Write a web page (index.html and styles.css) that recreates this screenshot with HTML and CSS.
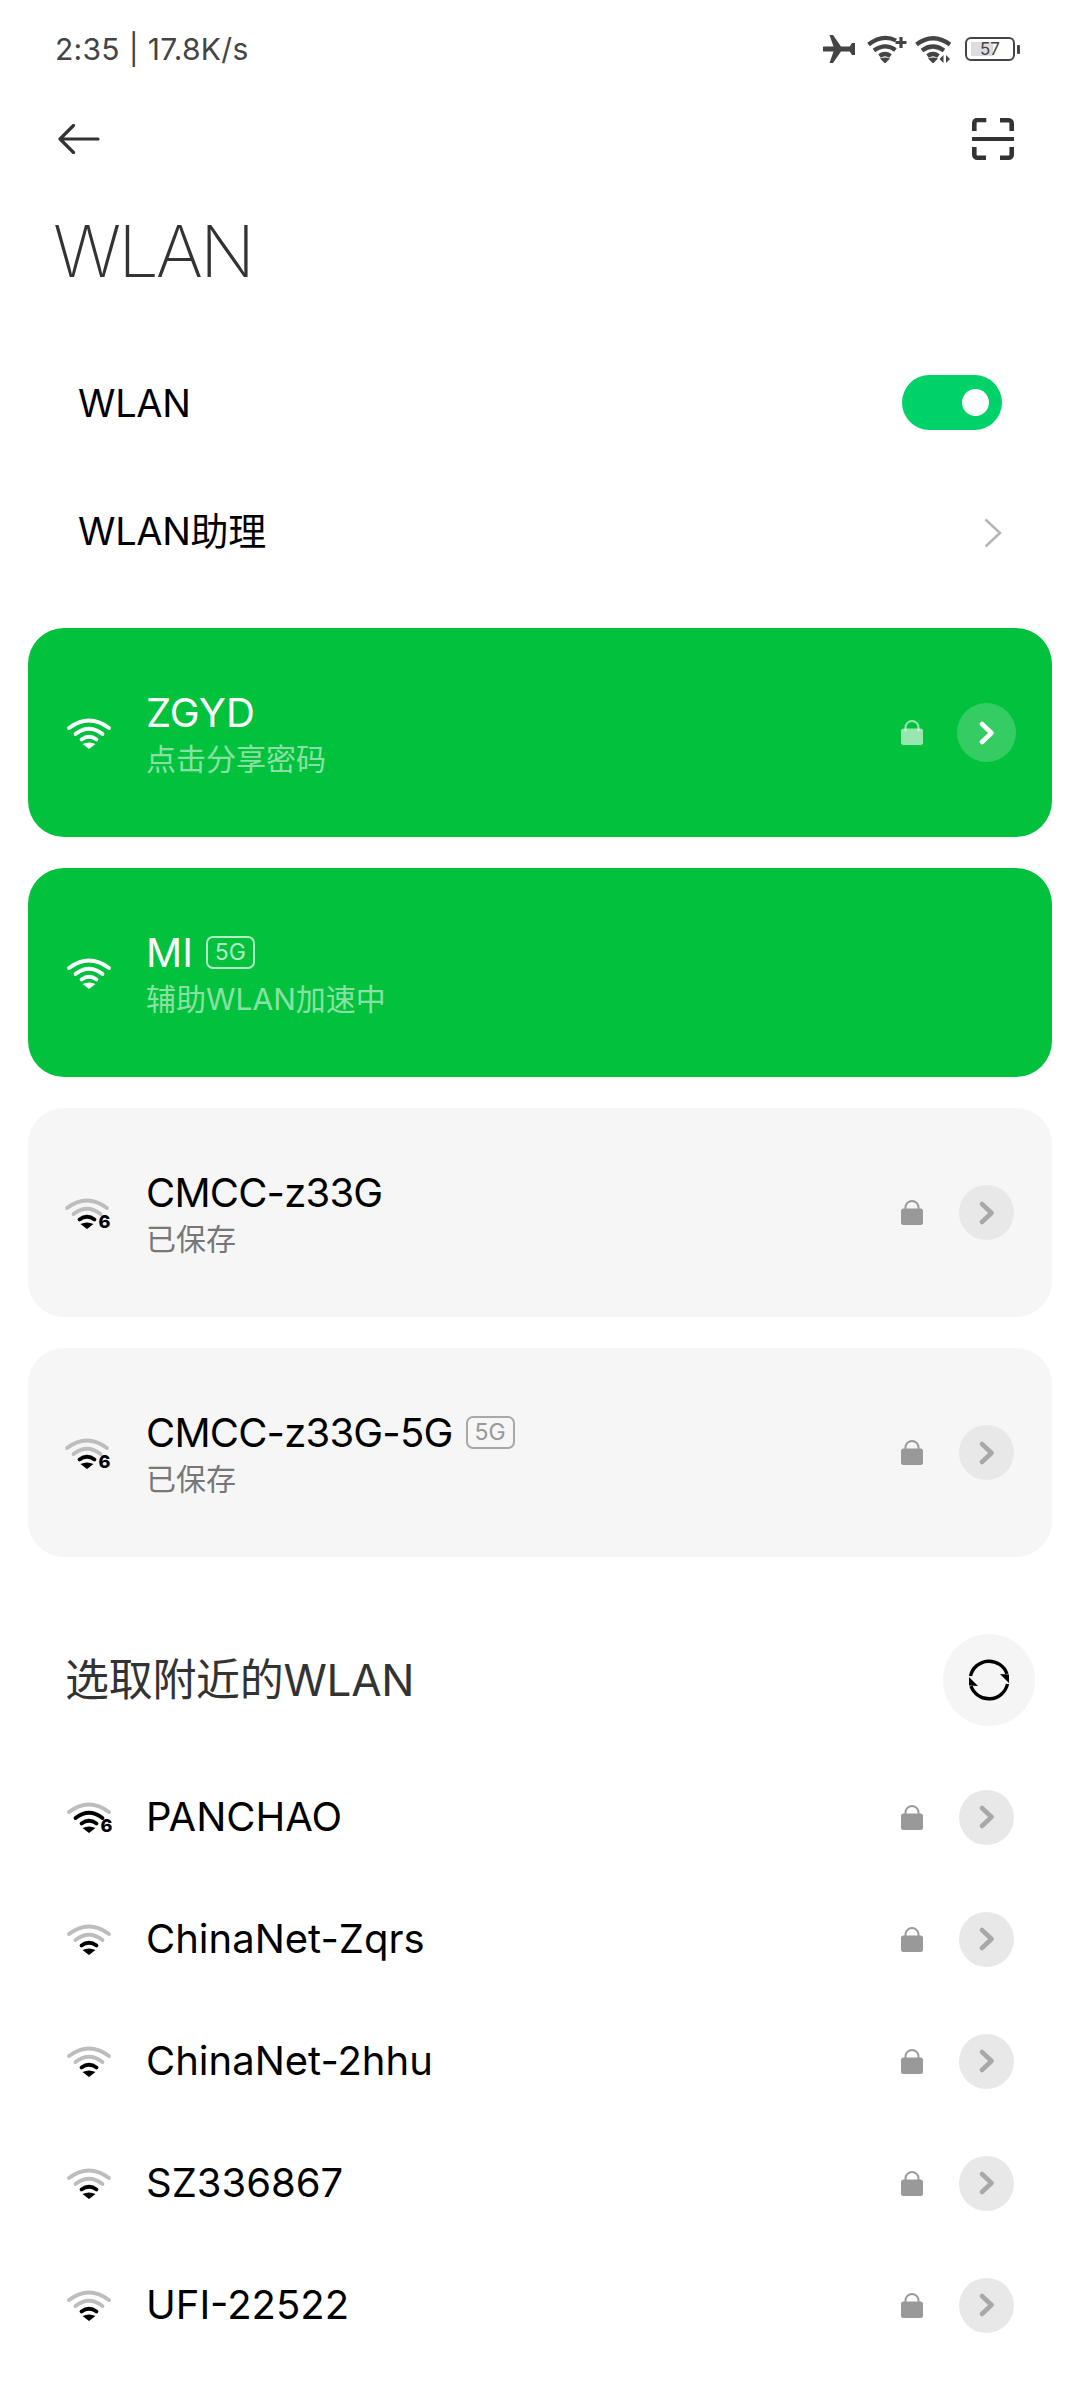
FILE: index.html
```
<!DOCTYPE html>
<html lang="zh">
<head>
<meta charset="utf-8">
<title>WLAN</title>
<link rel="stylesheet" href="styles.css">
</head>
<body>
<svg class="defs" width="0" height="0" aria-hidden="true">
  <defs>
    <symbol id="lock" viewBox="0 0 22 25">
      <path class="shackle" d="M4.5 11V7.5a6.5 6.5 0 0 1 13 0V11" fill="none" stroke="currentColor" stroke-width="2"/>
      <rect y="8.500" width="22" height="16.500" rx="2.500" fill="currentColor"/>
    </symbol>
    <symbol id="chev" viewBox="0 0 16 24">
      <path d="M3 3l9.500 9L3 21" fill="none" stroke="currentColor" stroke-width="4.500" stroke-linecap="round" stroke-linejoin="round"/>
    </symbol>
    <symbol id="wifi-arc1" viewBox="0 0 44 30" overflow="visible"><path d="M2 10Q22-5 42 10" fill="none" stroke="currentColor" stroke-width="3.800" stroke-linecap="round"/></symbol>
    <symbol id="wifi-arc2" viewBox="0 0 44 30" overflow="visible"><path d="M8.500 16Q22 5.500 35.500 16" fill="none" stroke="currentColor" stroke-width="3.800" stroke-linecap="round"/></symbol>
    <symbol id="wifi-arc3" viewBox="0 0 44 30" overflow="visible"><path d="M14.500 21.500Q22 16 29.500 21.500" fill="none" stroke="currentColor" stroke-width="3.800" stroke-linecap="round"/></symbol>
    <symbol id="wifi-dot" viewBox="0 0 44 30" overflow="visible"><path d="M22 31l-6.500-5q6.500-3 13 0z" fill="currentColor"/></symbol>
  </defs>
</svg>

<header class="status">
  <span class="status-text">2:35 | 17.8K/s</span>
  <div class="status-icons">
    <svg class="ic-plane" viewBox="0 0 32 28"><path d="M1.500 11.500h9L6.500 0h3.500l8 11.500h8.700l2.300-3.600H32v12.200h-3l-2.300-3.600H18L10 28H6.500l4-11.500h-9a2.500 2.500 0 0 1 0-5z" fill="#444"/></svg>
    <svg class="ic-wifi-s" viewBox="0 0 40 28" fill="none" stroke="#444" stroke-width="4.200">
      <path d="M1.500 9.500Q15.500-1.500 29 5.500"/><path d="M7 15.500Q18 7.500 28.500 15"/><path d="M12.500 21Q18 17 23.500 21"/>
      <path d="M18 28.500l-5-5q5-2 10 0z" fill="#444" stroke="none"/><path d="M34 2v11M28.500 7.500h11" stroke-width="3.200"/>
    </svg>
    <svg class="ic-wifi-a" viewBox="0 0 37 28" fill="none" stroke="#444" stroke-width="4.200">
      <path d="M1.500 9.500Q18-3 35 9.500"/><path d="M7 15.500Q18 7.500 29 15.500"/><path d="M12.500 21Q18 17 23.500 21"/>
      <path d="M18 28.500l-5-5q5-2 10 0zM28.500 20v8l-4-4zM31 20l4 4-4 4z" fill="#444" stroke="none"/>
    </svg>
    <div class="battery"><div class="battery-body"><span class="battery-fill"></span><span class="battery-num">57</span></div><span class="battery-nub"></span></div>
  </div>
</header>

<nav class="toolbar">
  <svg class="ic-back" viewBox="0 0 42 30" fill="none" stroke="#333" stroke-width="3.200" stroke-linecap="round" stroke-linejoin="round"><path d="M15.500 1.500L2 15l13.500 13.500M2 15h38"/></svg>
  <svg class="ic-scan" viewBox="0 0 42 42" fill="none" stroke="#333" stroke-width="4.600"><path d="M2.300 13V5a3 3 0 0 1 3-3h9M28 2.300h8.700a3 3 0 0 1 3 3V13M2.300 29v7.700a3 3 0 0 0 3 3H14M28 39.700h8.700a3 3 0 0 0 3-3V29"/><path d="M0 21h42" stroke-width="4" stroke-linecap="round"/></svg>
</nav>

<h1 class="title">WLAN</h1>

<section class="settings">
  <div class="setting"><span class="setting-label">WLAN</span><span class="toggle"><span class="knob"></span></span></div>
  <div class="setting"><span class="setting-label">WLAN助理</span><svg class="ic-more" viewBox="0 0 18 30" fill="none" stroke="#b5b5b5" stroke-width="2.500"><path d="M1.500 1.500L16 15 1.500 28.500"/></svg></div>
</section>

<section class="cards">
  <article class="card card-on">
    <svg class="wifi wifi-white"><use href="#wifi-arc1"/><use href="#wifi-arc2"/><use href="#wifi-arc3"/><use href="#wifi-dot"/></svg>
    <div class="info"><div class="name">ZGYD</div><div class="sub">点击分享密码</div></div>
    <svg class="lock"><use href="#lock"/></svg>
    <span class="go go-on"><svg class="chev"><use href="#chev"/></svg></span>
  </article>
  <article class="card card-on">
    <svg class="wifi wifi-white"><use href="#wifi-arc1"/><use href="#wifi-arc2"/><use href="#wifi-arc3"/><use href="#wifi-dot"/></svg>
    <div class="info"><div class="name">MI<span class="band">5G</span></div><div class="sub">辅助WLAN加速中</div></div>
  </article>
  <article class="card card-saved">
    <svg class="wifi wifi-six"><use class="dim" href="#wifi-arc1"/><use class="dim" href="#wifi-arc2"/><use href="#wifi-arc3"/><use href="#wifi-dot"/><text x="33.500" y="29.500" class="six">6</text></svg>
    <div class="info"><div class="name name-tight">CMCC-z33G</div><div class="sub">已保存</div></div>
    <svg class="lock"><use href="#lock"/></svg>
    <span class="go"><svg class="chev"><use href="#chev"/></svg></span>
  </article>
  <article class="card card-saved">
    <svg class="wifi wifi-six"><use class="dim" href="#wifi-arc1"/><use class="dim" href="#wifi-arc2"/><use href="#wifi-arc3"/><use href="#wifi-dot"/><text x="33.500" y="29.500" class="six">6</text></svg>
    <div class="info"><div class="name name-tight">CMCC-z33G-5G<span class="band">5G</span></div><div class="sub">已保存</div></div>
    <svg class="lock"><use href="#lock"/></svg>
    <span class="go"><svg class="chev"><use href="#chev"/></svg></span>
  </article>
</section>

<section class="nearby-head">
  <h2 class="nearby-title">选取附近的WLAN</h2>
  <span class="refresh">
    <svg class="ic-refresh" viewBox="0 0 42 42" fill="none" stroke="#000" stroke-width="3.400"><path d="M2.500 17A19 19 0 0 1 39 15"/><path d="M39.500 25A19 19 0 0 1 3 27"/><path d="M41 24l-9-9 9 .5zM1 18l9 9-9-.5z" fill="#000" stroke="none"/></svg>
  </span>
</section>

<section class="nearby">
  <div class="row">
    <svg class="wifi"><use class="dim" href="#wifi-arc1"/><use href="#wifi-arc2"/><use href="#wifi-arc3"/><use href="#wifi-dot"/><text x="33.500" y="29.500" class="six">6</text></svg>
    <div class="info"><div class="name">PANCHAO</div></div>
    <svg class="lock"><use href="#lock"/></svg>
    <span class="go"><svg class="chev"><use href="#chev"/></svg></span>
  </div>
  <div class="row">
    <svg class="wifi"><use class="dim" href="#wifi-arc1"/><use class="dim" href="#wifi-arc2"/><use href="#wifi-arc3"/><use href="#wifi-dot"/></svg>
    <div class="info"><div class="name">ChinaNet-Zqrs</div></div>
    <svg class="lock"><use href="#lock"/></svg>
    <span class="go"><svg class="chev"><use href="#chev"/></svg></span>
  </div>
  <div class="row">
    <svg class="wifi"><use class="dim" href="#wifi-arc1"/><use class="dim" href="#wifi-arc2"/><use href="#wifi-arc3"/><use href="#wifi-dot"/></svg>
    <div class="info"><div class="name">ChinaNet-2hhu</div></div>
    <svg class="lock"><use href="#lock"/></svg>
    <span class="go"><svg class="chev"><use href="#chev"/></svg></span>
  </div>
  <div class="row">
    <svg class="wifi"><use class="dim" href="#wifi-arc1"/><use class="dim" href="#wifi-arc2"/><use href="#wifi-arc3"/><use href="#wifi-dot"/></svg>
    <div class="info"><div class="name">SZ336867</div></div>
    <svg class="lock"><use href="#lock"/></svg>
    <span class="go"><svg class="chev"><use href="#chev"/></svg></span>
  </div>
  <div class="row">
    <svg class="wifi"><use class="dim" href="#wifi-arc1"/><use class="dim" href="#wifi-arc2"/><use href="#wifi-arc3"/><use href="#wifi-dot"/></svg>
    <div class="info"><div class="name">UFI-22522</div></div>
    <svg class="lock"><use href="#lock"/></svg>
    <span class="go"><svg class="chev"><use href="#chev"/></svg></span>
  </div>
</section>
</body>
</html>
```
FILE: styles.css
```
* { box-sizing: border-box; }
html, body { margin: 0; padding: 0; }
body {
  width: 1080px;
  height: 2400px;
  overflow: hidden;
  background: #fff;
  color: #000;
  font-family: "Inter", "Noto Sans CJK SC", sans-serif;
}
.defs { position: absolute; }

/* status bar */
.status {
  height: 98px;
  padding: 0 60px 0 55px;
  display: flex;
  align-items: center;
  justify-content: space-between;
}
.status-text { font-size: 30px; color: #444; letter-spacing: .3px; }
.status-icons { display: flex; align-items: center; }
.ic-plane { width: 32px; height: 28px; margin-right: 12px; }
.ic-wifi-s { width: 40px; height: 28px; margin-right: 8px; }
.ic-wifi-a { width: 37px; height: 28px; margin-right: 13px; }
.battery { display: flex; align-items: center; gap: 2px; }
.battery-body {
  position: relative;
  width: 50px;
  height: 24px;
  border: 2px solid #444;
  border-radius: 6px;
  display: flex;
  align-items: center;
  justify-content: center;
}
.battery-fill { position: absolute; left: 4px; top: 3px; bottom: 3px; width: 22px; background: #ddd; }
.battery-num { position: relative; font-size: 17px; color: #444; }
.battery-nub { width: 3px; height: 9px; background: #444; border-radius: 1px; }

/* toolbar */
.toolbar {
  height: 82px;
  padding: 0 66px 0 58px;
  display: flex;
  align-items: center;
  justify-content: space-between;
}
.ic-back { width: 42px; height: 30px; }
.ic-scan { width: 42px; height: 42px; }

.title {
  margin: 0;
  height: 140px;
  padding: 0 0 0 53px;
  font-size: 72px;
  font-weight: 250;
  line-height: 142px;
  letter-spacing: -3px;
  color: #333;
}

/* switches */
.settings { margin-top: 18px; }
.setting {
  height: 130px;
  padding: 0 78px;
  display: flex;
  align-items: center;
  justify-content: space-between;
  font-size: 38px;
  font-weight: 400;
}
.setting-label { line-height: 44px; letter-spacing: -.3px; }
.setting + .setting .setting-label { margin-top: -5px; }
.toggle {
  width: 100px;
  height: 55px;
  margin-top: -2px;
  border-radius: 28px;
  background: #00d26a;
  display: flex;
  align-items: center;
  justify-content: flex-end;
  padding-right: 13px;
}
.knob { width: 27px; height: 27px; border-radius: 50%; background: #fff; }
.ic-more { width: 18px; height: 30px; margin-right: 0; }

/* connected and saved networks */
.cards {
  margin-top: 30px;
  padding: 0 28px;
  display: flex;
  flex-direction: column;
  gap: 31px;
}
.card {
  height: 209px;
  border-radius: 36px;
  padding: 0 38px 0 39px;
  display: flex;
  align-items: center;
}
.card-on { background: #02c13d; color: #fff; }
.card-saved { background: #f6f6f6; }
.wifi { width: 44px; height: 30px; flex: none; overflow: visible; color: #000; }
.wifi use { width: 44px; height: 30px; }
.wifi .dim { color: #bdbdbd; }
.wifi-white { color: #fff; }
.wifi-six { margin-left: -2px; margin-right: 2px; }
.six { font-size: 18px; font-weight: 800; fill: #000; font-family: "Inter", sans-serif; }
.info { flex: 1; margin-left: 35px; min-width: 0; padding-top: 2px; }
.row .info { padding-top: 0; }
.name { font-size: 40px; line-height: 48px; font-weight: 400; display: flex; align-items: center; }
.name-tight { letter-spacing: -.8px; }
.sub { font-size: 30px; line-height: 40px; margin-top: 2px; color: #777; }
.card-on .sub { color: rgba(255, 255, 255, .55); }
.band {
  margin-left: 13px;
  width: 49px;
  height: 33px;
  border: 2px solid #a8a8a8;
  border-radius: 7px;
  color: #999;
  font-size: 23px;
  line-height: 29px;
  letter-spacing: 0;
  text-align: center;
}
.card-on .band { border-color: rgba(255, 255, 255, .7); color: rgba(255, 255, 255, .7); }
.lock { width: 22px; height: 25px; color: #999; flex: none; margin-right: 36px; }
.card-on .lock { color: rgba(255, 255, 255, .6); }
.go {
  width: 55px;
  height: 55px;
  flex: none;
  border-radius: 50%;
  background: #e8e8e8;
  color: #a8a8a8;
  display: flex;
  align-items: center;
  justify-content: center;
}
.go-on { width: 59px; height: 59px; margin: 0 -2px; background: rgba(255, 255, 255, .2); color: #fff; }
.chev { width: 16px; height: 24px; }

/* nearby networks */
.nearby-head {
  margin-top: 77px;
  padding: 0 45px 0 65px;
  display: flex;
  align-items: center;
  justify-content: space-between;
}
.nearby-title { margin: 0 0 1px; font-size: 44px; font-weight: 400; line-height: 52px; letter-spacing: -.3px; color: #333; }
.refresh {
  width: 92px;
  height: 92px;
  border-radius: 50%;
  background: #f5f5f5;
  display: flex;
  align-items: center;
  justify-content: center;
}
.ic-refresh { width: 42px; height: 42px; }
.nearby { margin-top: 30px; }
.row {
  height: 122px;
  padding: 0 66px 0 67px;
  display: flex;
  align-items: center;
}
```
